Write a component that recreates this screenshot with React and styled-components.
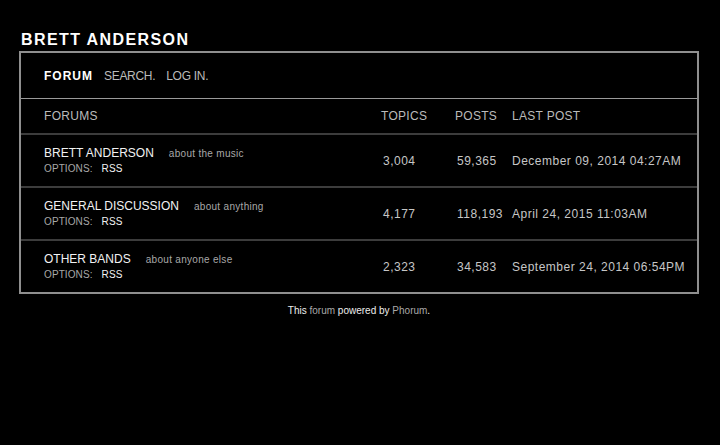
import styled, { createGlobalStyle } from "styled-components";

const Global = createGlobalStyle`
    html, body {
        margin: 0;
        background: #000;
    }
    body {
        font-family: "Liberation Sans", Arial, sans-serif;
        color: #ccc;
    }
`

const Page = styled.div`
    width: 680px;
    padding: 31px 0 0 19px;
`

const Title = styled.h1`
    margin: 0 0 2px 2px;
    font-size: 16px;
    line-height: 18px;
    font-weight: bold;
    letter-spacing: 1.4px;
    color: #fff;
`

const Box = styled.div`
    border: 2px solid #8f8f8f;
`

const Nav = styled.div`
    display: flex;
    align-items: center;
    gap: 11px;
    height: 45px;
    padding-left: 23px;
    border-bottom: 1px solid #9a9a9a;
    font-size: 12px;
`

const NavLink = styled.span`
    color: ${p => (p.$active ? "#fff" : "#bbb")};
    font-weight: ${p => (p.$active ? "bold" : "normal")};
    letter-spacing: ${p => (p.$active ? "1px" : "-0.3px")};
`

const Row = styled.div`
    display: grid;
    grid-template-columns: 337px 74px 57px 1fr;
    align-items: center;
    height: ${p => p.$h}px;
    padding-left: 23px;
    border-bottom: ${p => (p.$last ? "none" : "2px solid #3c3c3c")};
    font-size: 12px;
    letter-spacing: 0.3px;
    color: #bbb;
`

const ForumCell = styled.div`
    padding-bottom: 2px;
`

const Name = styled.div`
    display: flex;
    align-items: baseline;
    gap: 15px;
    color: #f2f2f2;
    font-size: 12px;
    letter-spacing: 0;
`

const Desc = styled.span`
    color: #a8a8a8;
    font-size: 10px;
    letter-spacing: 0.3px;
`

const Options = styled.div`
    margin-top: 3px;
    font-size: 10px;
    letter-spacing: 0.1px;
    color: #a8a8a8;

    b {
        margin-left: 9px;
        color: #f2f2f2;
        font-weight: normal;
    }
`

const Cell = styled.div`
    color: #c6c6c6;
    letter-spacing: 0.5px;
    padding-left: ${p => p.$pad || 0}px;
`

const Footer = styled.div`
    margin-top: 11px;
    text-align: center;
    font-size: 10px;
    color: #eee;

    a {
        color: #a8a8a8;
        text-decoration: none;
    }
`

const forums = [
    { name: "BRETT ANDERSON", desc: "about the music", topics: "3,004", posts: "59,365", last: "December 09, 2014 04:27AM" },
    { name: "GENERAL DISCUSSION", desc: "about anything", topics: "4,177", posts: "118,193", last: "April 24, 2015 11:03AM" },
    { name: "OTHER BANDS", desc: "about anyone else", topics: "2,323", posts: "34,583", last: "September 24, 2014 06:54PM" },
]

function App() {
    return (
        <Page>
            <Global />
            <Title>BRETT ANDERSON</Title>
            <Box>
                <Nav>
                    <NavLink $active>FORUM</NavLink>
                    <NavLink>SEARCH.</NavLink>
                    <NavLink>LOG IN.</NavLink>
                </Nav>
                <Row $h={34}>
                    <div>FORUMS</div>
                    <div>TOPICS</div>
                    <div>POSTS</div>
                    <div>LAST POST</div>
                </Row>
                {forums.map((f, i) => (
                    <Row key={f.name} $h={51} $last={i === forums.length - 1}>
                        <ForumCell>
                            <Name>
                                {f.name}
                                <Desc>{f.desc}</Desc>
                            </Name>
                            <Options>
                                OPTIONS:<b>RSS</b>
                            </Options>
                        </ForumCell>
                        <Cell $pad={2}>{f.topics}</Cell>
                        <Cell $pad={2}>{f.posts}</Cell>
                        <Cell>{f.last}</Cell>
                    </Row>
                ))}
            </Box>
            <Footer>
                This <a href="#">forum</a> powered by <a href="#">Phorum</a>.
            </Footer>
        </Page>
    )
}

export default App
